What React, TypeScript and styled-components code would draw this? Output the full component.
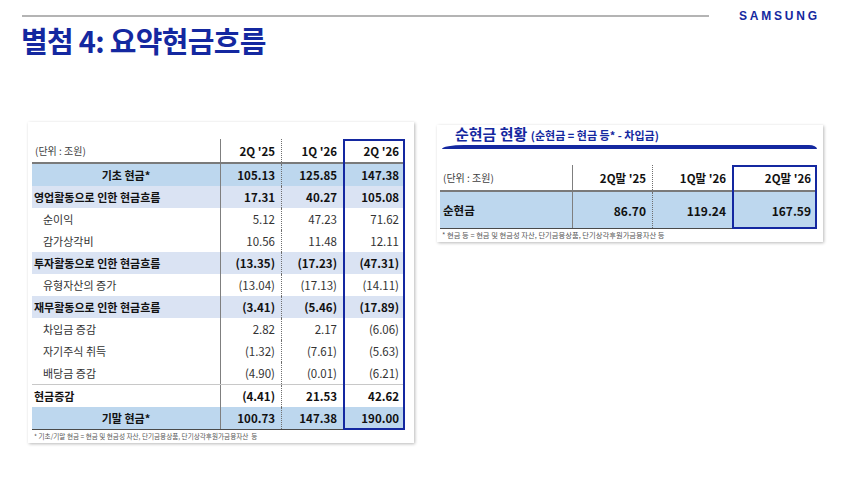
import styled, { createGlobalStyle } from "styled-components"

const GlobalStyle = createGlobalStyle`
  html, body {
    margin: 0;
    padding: 0;
    background: #fff;
  }
  body {
    font-family: "Noto Sans CJK KR", "Noto Sans", sans-serif;
    color: #1a1a1a;
  }
`

type Kind = "total" | "section" | "sub" | "net"

const flowRows: { label: string; kind: Kind; values: string[] }[] = [
  { label: "기초 현금*", kind: "total", values: ["105.13", "125.85", "147.38"] },
  { label: "영업활동으로 인한 현금흐름", kind: "section", values: ["17.31", "40.27", "105.08"] },
  { label: "순이익", kind: "sub", values: ["5.12", "47.23", "71.62"] },
  { label: "감가상각비", kind: "sub", values: ["10.56", "11.48", "12.11"] },
  { label: "투자활동으로 인한 현금흐름", kind: "section", values: ["(13.35)", "(17.23)", "(47.31)"] },
  { label: "유형자산의 증가", kind: "sub", values: ["(13.04)", "(17.13)", "(14.11)"] },
  { label: "재무활동으로 인한 현금흐름", kind: "section", values: ["(3.41)", "(5.46)", "(17.89)"] },
  { label: "차입금 증감", kind: "sub", values: ["2.82", "2.17", "(6.06)"] },
  { label: "자기주식 취득", kind: "sub", values: ["(1.32)", "(7.61)", "(5.63)"] },
  { label: "배당금 증감", kind: "sub", values: ["(4.90)", "(0.01)", "(6.21)"] },
  { label: "현금증감", kind: "net", values: ["(4.41)", "21.53", "42.62"] },
  { label: "기말 현금*", kind: "total", values: ["100.73", "147.38", "190.00"] },
]

const App = () => {
  return (
    <>
      <GlobalStyle />
      <Page>
        <Header>
          <Rule />
          <Logo>SAMSUNG</Logo>
        </Header>
        <Title>별첨 4: 요약현금흐름</Title>

        <Body>
          <FlowCard>
            <FlowTable>
              <FlowRow $kind="head">
                <Unit>(단위 : 조원)</Unit>
                <Num $line="dotted" $bold>2Q '25</Num>
                <Num $bold>1Q '26</Num>
                <Num $bold>2Q '26</Num>
              </FlowRow>
              {flowRows.map((r, i) => (
                <FlowRow key={i} $kind={r.kind} $last={i === flowRows.length - 1}>
                  <Label $kind={r.kind}>{r.label}</Label>
                  <Num $line="dotted" $bold={r.kind !== "sub"}>{r.values[0]}</Num>
                  <Num $bold={r.kind !== "sub"}>{r.values[1]}</Num>
                  <Num $bold={r.kind !== "sub"}>{r.values[2]}</Num>
                </FlowRow>
              ))}
              <Highlight $width={62} />
            </FlowTable>
            <Note $size={6.6}>* 기초/기말 현금 = 현금 및 현금성 자산, 단기금융상품, 단기상각후원가금융자산&nbsp; 등</Note>
          </FlowCard>

          <NetCard>
            <NetTitle>
              순현금 현황 <small>(순현금 = 현금 등* - 차입금)</small>
            </NetTitle>
            <Swoosh />
            <NetTable>
              <NetRow $head>
                <Unit>(단위 : 조원)</Unit>
                <Num $line="dotted" $bold $size={11.5}>2Q말 '25</Num>
                <Num $bold $size={11.5}>1Q말 '26</Num>
                <Num $bold $size={11.5}>2Q말 '26</Num>
              </NetRow>
              <NetRow>
                <NetLabel>순현금</NetLabel>
                <Num $line="dotted" $bold $size={12}>86.70</Num>
                <Num $bold $size={12}>119.24</Num>
                <Num $bold $size={12}>167.59</Num>
              </NetRow>
              <Highlight $width={85} />
            </NetTable>
            <Note $size={7.3}>* 현금 등 = 현금 및 현금성 자산, 단기금융상품, 단기상각후원가금융자산 등</Note>
          </NetCard>
        </Body>
      </Page>
    </>
  )
}

export default App

const Page = styled.div`
  width: 850px;
  height: 477px;
  overflow: hidden;
  background: #fff;
`
const Header = styled.div`
  display: flex;
  align-items: flex-start;
  padding: 10px 0 0 22px;
  height: 14px;
`
const Rule = styled.div`
  width: 687px;
  height: 2px;
  margin-top: 5px;
  background-color: #b4b4b4;
`
const Logo = styled.div`
  margin-left: 30px;
  margin-top: -1px;
  font-family: "Liberation Sans", Arial, sans-serif;
  font-weight: 700;
  font-size: 12px;
  line-height: 14px;
  letter-spacing: 2.8px;
  color: #1428a0;
`
const Title = styled.h1`
  margin: 0 0 0 21px;
  padding-top: 0;
  font-size: 29px;
  line-height: 32px;
  font-weight: 700;
  letter-spacing: -0.7px;
  color: #1428a0;
`
const Body = styled.div`
  display: flex;
  align-items: flex-start;
  gap: 23px;
  margin-top: 66px;
  padding-left: 28px;
`
const Card = styled.div`
  box-sizing: border-box;
  width: 386px;
  background: #fff;
  box-shadow: 1px 1px 3px rgba(0, 0, 0, 0.28);
`
const FlowCard = styled(Card)`
  padding: 17px 9px 2px 4px;
`
const NetCard = styled(Card)`
  margin-top: 3px;
  padding: 0 6px 2px 3px;
`
const FlowTable = styled.div`
  position: relative;
`
const FlowRow = styled.div<{ $kind: Kind | "head"; $last?: boolean }>`
  display: grid;
  grid-template-columns: 189px 61px 61px 62px;
  height: ${(p) => (p.$kind === "head" ? "23px" : "22px")};
  background-color: ${(p) =>
    p.$kind === "total" ? "#bdd7ee" : p.$kind === "section" ? "#dae3f3" : "#fff"};
  border-bottom: ${(p) =>
    p.$kind === "head" ? "2px solid #7a7a7a" : p.$last ? "1.5px solid #4a4a4a" : "none"};
  border-top: ${(p) => (p.$kind === "net" ? "1px solid #c8c8c8" : "none")};
  box-sizing: content-box;
`
const Cell = styled.div`
  display: flex;
  align-items: center;
  box-sizing: border-box;
  overflow: hidden;
  white-space: nowrap;
`
const Unit = styled(Cell)`
  padding-left: 3px;
  font-size: 10px;
  color: #404040;
  border-right: 1px solid #7f7f7f;
`
const Label = styled(Cell)<{ $kind: Kind }>`
  justify-content: ${(p) => (p.$kind === "total" ? "center" : "flex-start")};
  padding-left: ${(p) => (p.$kind === "sub" ? "11px" : p.$kind === "total" ? "0" : "2px")};
  font-size: 11px;
  font-weight: ${(p) => (p.$kind === "sub" ? 400 : 700)};
  color: ${(p) => (p.$kind === "sub" ? "#333" : "#111")};
  border-right: 1px solid #7f7f7f;
`
const Num = styled(Cell)<{ $bold?: boolean; $line?: "dotted"; $size?: number }>`
  justify-content: flex-end;
  padding-right: 6px;
  font-size: ${(p) => p.$size ?? 11.5}px;
  font-weight: ${(p) => (p.$bold ? 700 : 400)};
  color: ${(p) => (p.$bold ? "#111" : "#333")};
  border-right: ${(p) => (p.$line ? "1px dotted #6f6f6f" : "none")};
`
const Highlight = styled.div<{ $width: number }>`
  position: absolute;
  top: 0;
  right: 0;
  bottom: 0;
  width: ${(p) => p.$width}px;
  border: 2px solid #1428a0;
  box-sizing: border-box;
  pointer-events: none;
`
const Note = styled.div<{ $size: number }>`
  padding: 2px 0 0 2px;
  font-size: ${(p) => p.$size}px;
  line-height: 9px;
  color: #555;
  white-space: nowrap;
`
const NetTitle = styled.div`
  padding-left: 15px;
  height: 20px;
  font-size: 15px;
  line-height: 18px;
  font-weight: 700;
  color: #1428a0;
  white-space: nowrap;

  small {
    font-size: 11px;
    font-weight: 700;
  }
`
const Swoosh = styled.div`
  height: 4px;
  margin: 0 0 0 2px;
  background-color: #1428a0;
  border-radius: 22px 8px 0 0 / 4px 4px 0 0;
`
const NetTable = styled.div`
  position: relative;
  margin-top: 16px;
`
const NetRow = styled.div<{ $head?: boolean }>`
  display: grid;
  grid-template-columns: 133px 80px 79px 85px;
  height: ${(p) => (p.$head ? "25px" : "36px")};
  background-color: ${(p) => (p.$head ? "#fff" : "#bdd7ee")};
  border-bottom: ${(p) => (p.$head ? "2px solid #7a7a7a" : "1px solid #4a4a4a")};
`
const NetLabel = styled(Cell)`
  padding-left: 3px;
  font-size: 11.5px;
  font-weight: 700;
  color: #111;
  border-right: 1px solid #7f7f7f;
`
